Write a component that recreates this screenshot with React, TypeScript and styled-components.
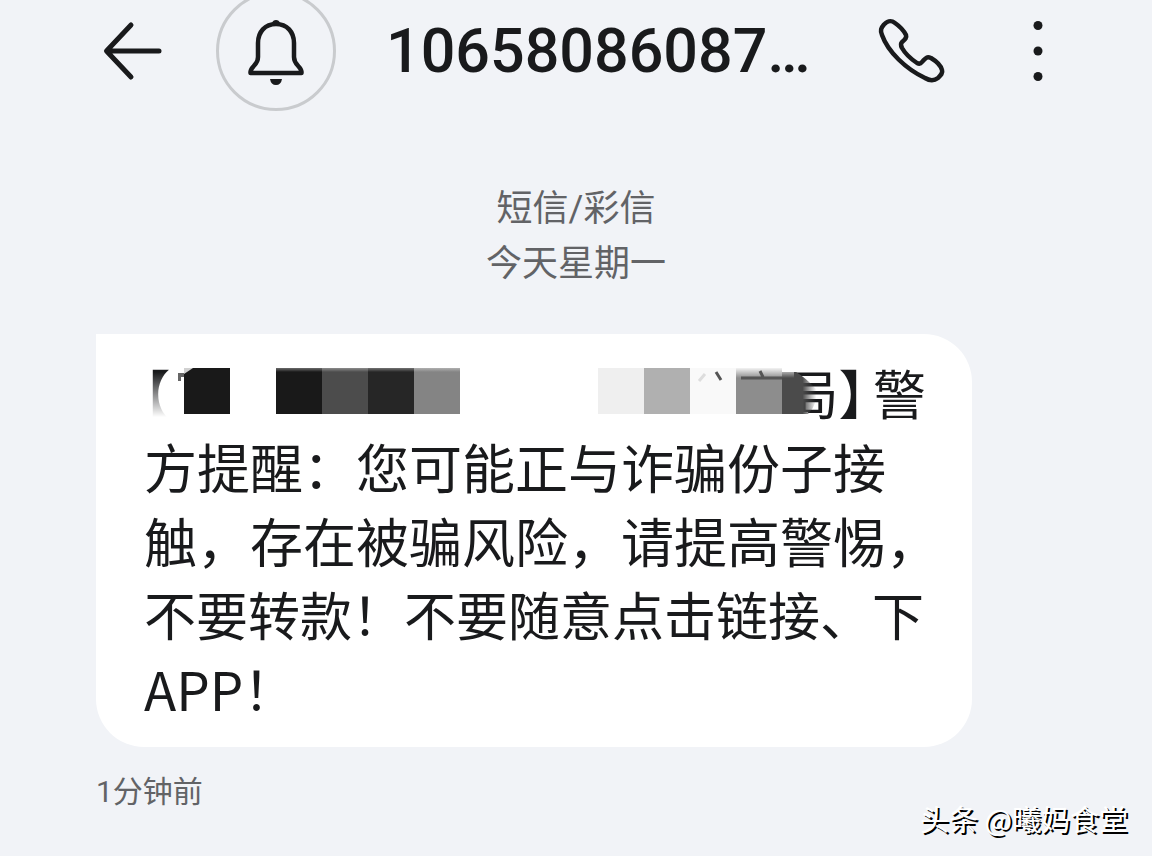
import React from 'react';
import styled, { createGlobalStyle } from 'styled-components';

const ink = '#191a1c';

const GlobalStyle = createGlobalStyle`
  * { box-sizing: border-box; }
  body {
    margin: 0;
    background: #f1f3f7;
    color: ${ink};
    font-family: Roboto, "Noto Sans CJK SC", sans-serif;
  }
`;

const Page = styled.main`
  position: relative;
  display: flex;
  flex-direction: column;
  min-height: 100vh;
  overflow: hidden;
`;

const Header = styled.header`
  display: flex;
  align-items: center;
  height: 101px;
  padding: 0 84px 0 96px;
`;

const IconButton = styled.button<{ $width: number }>`
  display: flex;
  flex: none;
  align-items: center;
  justify-content: center;
  width: ${({ $width }) => $width}px;
  height: 72px;
  padding: 0;
  border: 0;
  background: none;
  color: inherit;
`;

const BellButton = styled(IconButton)`
  height: 120px;
  margin-left: 48px;
  border: 3px solid #c9cbce;
  border-radius: 50%;
`;

const Title = styled.h1`
  flex: 1;
  margin: 0 0 0 50px;
  font-size: 61px;
  font-weight: 500;
  line-height: 74px;
  white-space: nowrap;
`;

const HeaderActions = styled.div`
  display: flex;
  gap: 60px;
`;

const ThreadInfo = styled.div`
  margin-top: 81px;
  color: #626366;
  font-size: 36px;
  line-height: 55px;
  text-align: center;
`;

const InfoLine = styled.p`
  margin: 0;
`;

const Message = styled.article`
  margin: 42px 180px 0 96px;
`;

const Bubble = styled.div`
  padding: 21px 46px 22px 48px;
  border-radius: 0 48px 48px 48px;
  background: #fff;
`;

const Line = styled.p<{ $compact?: boolean }>`
  position: relative;
  margin: 0;
  font-family: "Noto Sans CJK SC", sans-serif;
  font-size: ${({ $compact }) => ($compact ? 52 : 53)}px;
  line-height: 74px;
  white-space: nowrap;
`;

const SenderLine = styled(Line)`
  display: flex;
  justify-content: space-between;
  font-feature-settings: "halt";
`;

const SenderEnd = styled.span`
  display: flex;
  gap: 8px;
`;

const Mosaic = styled.svg`
  position: absolute;
  top: 9px;
  left: 0;
`;

const Time = styled.time`
  display: block;
  margin-top: 23px;
  color: #626366;
  font-size: 30px;
  line-height: 44px;
`;

const Watermark = styled.footer`
  position: absolute;
  right: 24px;
  bottom: 16px;
  color: #fff;
  font-family: "Noto Sans CJK SC", sans-serif;
  font-size: 29px;
  line-height: 44px;
  text-shadow: 2px 2px 0 #000;
`;

const BackIcon = () => (
  <svg width="72" height="72" viewBox="0 0 72 72" fill="none" stroke="currentColor" strokeWidth="5" strokeLinecap="round" strokeLinejoin="round" aria-hidden="true">
    <path d="M35 10 10.500 36 35 62M12 36H63" />
  </svg>
);

const BellIcon = () => (
  <svg width="60" height="72" viewBox="0 0 60 72" fill="none" stroke="currentColor" strokeWidth="4.500" strokeLinejoin="round" aria-hidden="true">
    <path d="M30 9C19 9 12 17 12 28V42C12 51 4 51 4.500 58H55.500C56 51 48 51 48 42V28C48 17 41 9 30 9Z" />
    <path d="M26 8a4.200 4.200 0 0 1 8 0ZM24 64h12q-1 6-6 6t-6-6Z" fill="currentColor" stroke="none" />
  </svg>
);

const PhoneIcon = () => (
  <svg width="72" height="72" viewBox="0 0 72 72" fill="none" stroke="currentColor" strokeWidth="4.500" strokeLinejoin="round" aria-hidden="true">
    <path d="M8 9.500C12 5.500 15 5 19 8C24 11.500 28 16 30 20C31 23 29 24.500 26 27C24 29 25 31 26 33C30 40 35 44 41 48C43 49 44.500 49 46 47C49 44 50 41 55 43C60 46 65 51 66 55C67 58 65 60 62 63C58 66 54 66 49 63C30 54 12 37 6 20C4 15 5 13 8 9.500Z" />
  </svg>
);

const MoreIcon = () => (
  <svg width="60" height="72" viewBox="0 0 60 72" fill="currentColor" aria-hidden="true">
    <circle cx="30" cy="10.500" r="4.500" />
    <circle cx="30" cy="36" r="4.500" />
    <circle cx="30" cy="61.500" r="4.500" />
  </svg>
);

const blocks = [
  [40, '#191919'],
  [132, '#191919'],
  [178, '#4c4c4c'],
  [224, '#262626'],
  [270, '#848484'],
  [454, '#efefef'],
  [500, '#b0b0b0'],
  [546, '#f9f9f9'],
  [592, '#8d8d8d'],
] as const;

const Redaction = () => (
  <Mosaic width="710" height="60" viewBox="0 0 710 60" aria-hidden="true">
    <defs>
      <linearGradient id="fadeDown" x1="0" y1="0" x2="0" y2="1">
        <stop offset="0" stopColor="#fff" stopOpacity="0" />
        <stop offset="0.900" stopColor="#fff" />
      </linearGradient>
      <linearGradient id="fadeRight">
        <stop offset="0.600" stopColor="#4b4b4b" />
        <stop offset="1" stopColor="#4b4b4b" stopOpacity="0" />
      </linearGradient>
      <linearGradient id="topLight" x1="0" y1="0" x2="0" y2="1">
        <stop offset="0" stopColor="#fff" stopOpacity="0.900" />
        <stop offset="1" stopColor="#fff" stopOpacity="0" />
      </linearGradient>
    </defs>
    <rect x="0" y="8" width="28" height="50" fill="url(#fadeDown)" />
    <path d="M34 17V9h6v4h-3v4Z" fill="#666" />
    <rect x="636" y="48" width="28" height="12" fill="#fff" />
    {blocks.map(([x, fill]) => (
      <rect key={x} x={x} y="4" width="46" height="46" fill={fill} />
    ))}
    <path d="M638 8h14q10 6 20 17 2 16-8 25h-26Z" fill="url(#fadeRight)" />
    <path d="M592 4h58v10h-58Z" fill="url(#topLight)" />
    <path d="M40 4h9l-9 6Z" fill="#fff" opacity="0.800" />
    <path d="M132 4h184v4H132Z" fill="url(#topLight)" opacity="0.400" />
    <path d="m572 8 5 8M616 7l3 6M597 14h41" stroke="#555" strokeWidth="3" />
    <path d="m561 10-6 7" stroke="#ddd" strokeWidth="3" />
  </Mosaic>
);

export default function App() {
  return (
    <>
      <GlobalStyle />
      <Page>
        <Header>
          <IconButton $width={72} type="button" aria-label="返回"><BackIcon /></IconButton>
          <BellButton $width={120} type="button" aria-label="通知"><BellIcon /></BellButton>
          <Title>10658086087…</Title>
          <HeaderActions>
            <IconButton $width={72} type="button" aria-label="拨打电话"><PhoneIcon /></IconButton>
            <IconButton $width={60} type="button" aria-label="更多"><MoreIcon /></IconButton>
          </HeaderActions>
        </Header>
        <ThreadInfo>
          <InfoLine>短信/彩信</InfoLine>
          <InfoLine>今天星期一</InfoLine>
        </ThreadInfo>
        <Message>
          <Bubble>
            <SenderLine>
              <span>【</span>
              <SenderEnd><span>局】</span><span>警</span></SenderEnd>
              <Redaction />
            </SenderLine>
            <Line>方提醒：您可能正与诈骗份子接</Line>
            <Line>触，存在被骗风险，请提高警惕，</Line>
            <Line $compact>不要转款！不要随意点击链接、下</Line>
            <Line>APP！</Line>
          </Bubble>
          <Time>1分钟前</Time>
        </Message>
        <Watermark>头条 @曦妈食堂</Watermark>
      </Page>
    </>
  );
}
